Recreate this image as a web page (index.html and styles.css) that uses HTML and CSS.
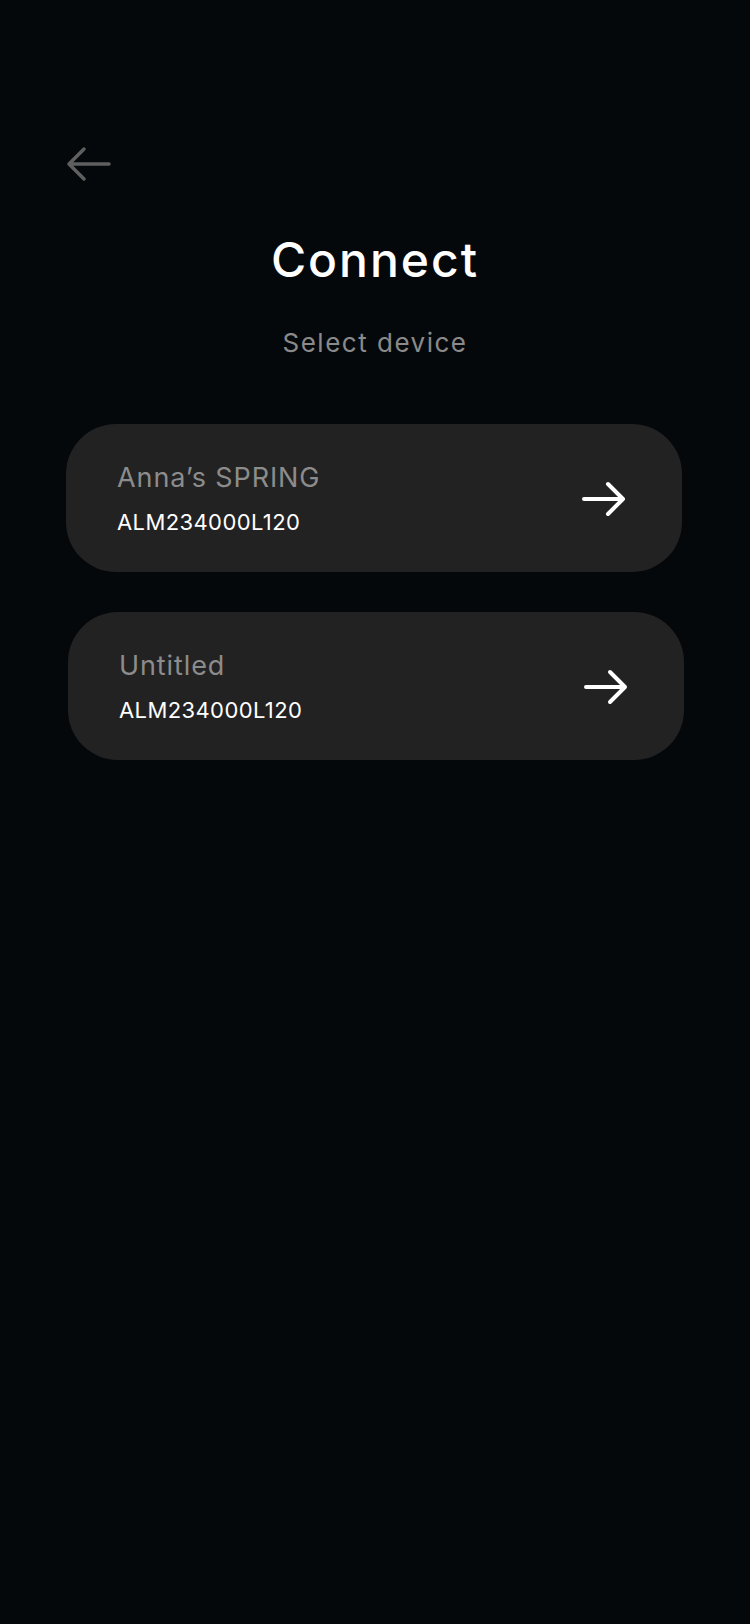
FILE: index.html
```html
<!DOCTYPE html>
<html lang="en">
<head>
<meta charset="utf-8">
<title>Connect</title>
<link rel="stylesheet" href="styles.css">
</head>
<body>
<main class="screen">
  <button class="back" aria-label="Back">
    <svg width="46" height="36" viewBox="0 0 46 36" fill="none" stroke="currentColor" stroke-width="3.5" stroke-linecap="round" stroke-linejoin="round">
      <path d="M3 18 H43 M18 3 L3 18 L18 33"/>
    </svg>
  </button>
  <h1 class="title">Connect</h1>
  <p class="subtitle">Select device</p>
  <ul class="devices">
    <li class="device">
      <div class="device-info">
        <span class="device-name">Anna’s SPRING</span>
        <span class="device-id">ALM234000L120</span>
      </div>
      <svg class="device-go" width="44" height="36" viewBox="0 0 44 36" fill="none" stroke="currentColor" stroke-width="4" stroke-linecap="round" stroke-linejoin="round">
        <path d="M2 18 H41 M26 3 L41 18 L26 33"/>
      </svg>
    </li>
    <li class="device device-shift">
      <div class="device-info">
        <span class="device-name">Untitled</span>
        <span class="device-id">ALM234000L120</span>
      </div>
      <svg class="device-go" width="44" height="36" viewBox="0 0 44 36" fill="none" stroke="currentColor" stroke-width="4" stroke-linecap="round" stroke-linejoin="round">
        <path d="M2 18 H41 M26 3 L41 18 L26 33"/>
      </svg>
    </li>
  </ul>
</main>
</body>
</html>
```

FILE: styles.css
```css
* { box-sizing: border-box; }

html, body {
  margin: 0;
  padding: 0;
  background: #05080b;
}

body {
  min-height: 1624px;
  font-family: Inter, "Noto Sans", sans-serif;
  color: #ffffff;
}

.screen {
  display: flex;
  flex-direction: column;
  padding: 146px 0 0 0;
}

.back {
  align-self: flex-start;
  margin-left: 66px;
  padding: 0;
  border: 0;
  background: none;
  color: #5f5f5f;
  display: flex;
  cursor: pointer;
}

.title {
  margin: 54px 0 0;
  text-align: center;
  font-size: 48px;
  line-height: 48px;
  font-weight: 500;
  letter-spacing: 2px;
}

.subtitle {
  margin: 46px 0 0;
  text-align: center;
  font-size: 26px;
  line-height: 26px;
  font-weight: 400;
  color: #8a8a8a;
  letter-spacing: 1.5px;
}

.devices {
  list-style: none;
  margin: 68px 0 0;
  padding: 0 0 0 66px;
  display: flex;
  flex-direction: column;
  gap: 40px;
}

.device {
  width: 616px;
  display: flex;
  align-items: center;
  justify-content: space-between;
  padding: 40px 56px 39px 51px;
  background: #222222;
  border-radius: 50px;
}

.device-shift {
  margin-left: 2px;
}

.device-info {
  display: flex;
  flex-direction: column;
  gap: 20px;
}

.device-name {
  font-size: 27px;
  line-height: 27px;
  color: #8c8c8c;
  letter-spacing: 0.9px;
}

.device-id {
  font-size: 22px;
  line-height: 22px;
  color: #ffffff;
  letter-spacing: 0.4px;
}

.device-go {
  color: #ffffff;
  display: block;
}
```
